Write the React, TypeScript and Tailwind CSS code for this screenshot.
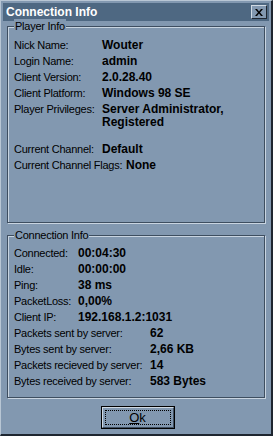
import React from "react";

const font = { fontFamily: '"Liberation Sans", Arial, sans-serif' };

function Row({ label, value, w }: { label: string; value: string; w: string }) {
  return (
    <div className="flex h-4 items-center whitespace-nowrap">
      <div className={`${w} shrink-0 text-[11px] tracking-[-0.25px] text-black`}>{label}</div>
      <div className="text-[12px] font-bold text-black">{value}</div>
    </div>
  );
}

function Group({ title, className, children }: { title: string; className: string; children: React.ReactNode }) {
  return (
    <div
      className={`relative mx-[4px] border border-[#3e4e60] shadow-[inset_1px_1px_0_#c8d4e0,1px_1px_0_#c8d4e0] ${className}`}
    >
      <div className="absolute left-[6px] top-[-8px] whitespace-nowrap bg-[#8298b0] px-[1px] text-[11px] leading-[14px] tracking-[-0.25px] text-black">
        {title}
      </div>
      {children}
    </div>
  );
}

export default function App() {
  return (
    <div style={font} className="h-[436px] w-[273px] overflow-hidden bg-[#8298b0]">
      <div className="flex h-[436px] w-[273px] flex-col border-b-2 border-l border-r-2 border-t border-b-[#1e2630] border-l-[#b8c6d4] border-r-[#1e2630] border-t-[#b8c6d4] p-[2px]">
        {/* title bar */}
        <div className="flex h-[18px] items-center justify-between bg-[#4e6882] pl-[3px] pr-[2px]">
          <span className="text-[12px] font-bold text-white">Connection Info</span>
          <div className="flex h-[14px] w-[16px] items-center justify-center border border-b-[#1e2630] border-l-[#d0dae4] border-r-[#1e2630] border-t-[#d0dae4] bg-[#8298b0]">
            <svg width="8" height="7" viewBox="0 0 8 7">
              <path d="M0 0h2l2 2.5 2-2.5h2L5 3.5 8 7H6L4 4.5 2 7H0l3-3.5z" fill="#000" />
            </svg>
          </div>
        </div>

        <Group title="Player Info" className="mt-[5px] h-[197px] pl-[6px] pt-[10px]">
          <Row label="Nick Name:" value="Wouter" w="w-[88px]" />
          <Row label="Login Name:" value="admin" w="w-[88px]" />
          <Row label="Client Version:" value="2.0.28.40" w="w-[88px]" />
          <Row label="Client Platform:" value="Windows 98 SE" w="w-[88px]" />
          <div className="flex whitespace-nowrap pt-[2px] leading-[13px]">
            <div className="w-[88px] shrink-0 text-[11px] tracking-[-0.25px] text-black">Player Privileges:</div>
            <div className="text-[12px] font-bold text-black">
              Server Administrator,
              <br />
              Registered
            </div>
          </div>
          <div className="mt-[12px]">
            <Row label="Current Channel:" value="Default" w="w-[88px]" />
            <Row label="Current Channel Flags:" value="None" w="w-[112px]" />
          </div>
        </Group>

        <Group title="Connection Info" className="mt-[12px] h-[163px] pl-[6px] pt-[9px]">
          <Row label="Connected:" value="00:04:30" w="w-[64px]" />
          <Row label="Idle:" value="00:00:00" w="w-[64px]" />
          <Row label="Ping:" value="38 ms" w="w-[64px]" />
          <Row label="PacketLoss:" value="0,00%" w="w-[64px]" />
          <Row label="Client IP:" value="192.168.1.2:1031" w="w-[64px]" />
          <Row label="Packets sent by server:" value="62" w="w-[136px]" />
          <Row label="Bytes sent by server:" value="2,66 KB" w="w-[136px]" />
          <Row label="Packets recieved by server:" value="14" w="w-[136px]" />
          <Row label="Bytes received by server:" value="583 Bytes" w="w-[136px]" />
        </Group>

        <div className="mt-[8px] flex justify-center">
          <button className="ml-[3px] h-[23px] w-[74px] border border-black bg-[#8298b0] p-0">
            <div className="h-full w-full border border-b-[#3e4e60] border-l-[#d0dae4] border-r-[#3e4e60] border-t-[#d0dae4] p-[2px]">
              <div className="flex h-full w-full items-center justify-center border border-dotted border-black text-[13px] text-black">
                <span>
                  <span className="underline">O</span>k
                </span>
              </div>
            </div>
          </button>
        </div>
      </div>
    </div>
  );
}
